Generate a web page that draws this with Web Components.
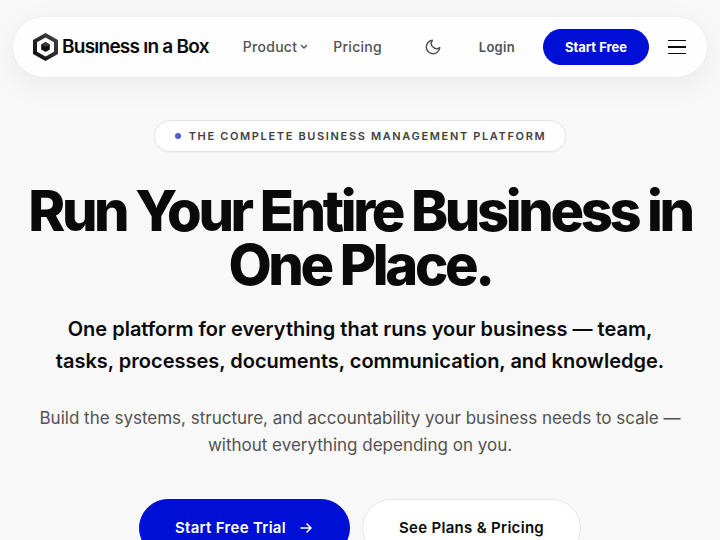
<!DOCTYPE html>
<html lang="en">
<head>
<meta charset="utf-8">
<meta name="viewport" content="width=device-width, initial-scale=1">
<title>Business in a Box</title>
<style>
body { margin: 0; background: #f8f8f8; color: #0a0a0a; font-family: Inter, "Liberation Sans", sans-serif; }
</style>
</head>
<body>
<landing-page></landing-page>
<script>
const define = (name, html) => customElements.define(name, class extends HTMLElement {
  constructor() {
    super();
    this.attachShadow({ mode: "open" }).innerHTML = "<style>*{box-sizing:border-box}</style>" + html;
  }
});

define("brand-logo", `
<style>
:host { display: block; }
a { display: flex; align-items: center; gap: 4px; color: #0a0a0a; text-decoration: none; font-size: 19px; line-height: 28px; font-weight: 600; letter-spacing: -0.04em; white-space: nowrap; }
svg { display: block; flex: none; }
</style>
<a href="#">
<svg width="26" height="28" viewBox="0 0 26 28" aria-hidden="true">
<defs><linearGradient id="g" x1="0" y1="1" x2="1" y2="0"><stop offset="0" stop-color="#050505"/><stop offset=".5" stop-color="#2a2a2a"/><stop offset="1" stop-color="#444"/></linearGradient></defs>
<path fill="url(#g)" fill-rule="evenodd" d="M13.500 0 26 7V21L13.500 28 1 21V7ZM13.500 4.500 5 9.300V18.700L13.500 23.500 22 18.700V9.300Z"/>
<path fill="#111" d="M13.500 9 17.800 11.500V16.500L13.500 19 9.200 16.500V11.500Z"/>
<path fill="#3c3c3c" d="M13.500 9 17.800 11.500 13.500 14 9.200 11.500Z"/>
</svg>
<slot></slot></a>`);

define("nav-link", `
<style>
:host { display: block; }
a { display: flex; align-items: center; gap: 3px; color: #525252; text-decoration: none; font-size: 14px; line-height: 20px; font-weight: 500; letter-spacing: 0.02em; }
svg { display: none; }
:host([menu]) svg { display: block; }
:host([strong]) a { font-size: 13px; font-weight: 600; letter-spacing: 0.02em; }
</style>
<a href="#"><slot></slot><svg width="8" height="8" viewBox="0 0 8 8" fill="none" stroke="currentColor" stroke-width="1.400" stroke-linecap="round" stroke-linejoin="round" aria-hidden="true"><path d="M1.500 2.500 4 5 6.500 2.500"/></svg></a>`);

define("theme-toggle", `
<style>
:host { display: block; }
button { display: grid; place-items: center; width: 36px; height: 36px; padding: 0; border: 0; background: none; color: #525252; }
</style>
<button type="button" aria-label="Switch theme"><svg width="18" height="18" viewBox="0 0 24 24" fill="none" stroke="currentColor" stroke-width="2" stroke-linecap="round" stroke-linejoin="round"><path d="M21 12.790A9 9 0 1 1 11.210 3 7 7 0 0 0 21 12.790z"/></svg></button>`);

define("menu-toggle", `
<style>
:host { display: block; }
button { display: grid; place-items: center; width: 18px; height: 36px; padding: 0; border: 0; background: none; color: #0a0a0a; }
svg { display: block; }
</style>
<button type="button" aria-label="Open menu"><svg width="18" height="16" viewBox="0 0 18 16" fill="currentColor"><path d="M0 1h18v1H0zM0 7h18v2H0zM0 14h18v1H0z"/></svg></button>`);

define("pill-button", `
<style>
:host { display: block; }
a { display: flex; align-items: center; justify-content: center; height: 58px; padding: 0 36px; border-radius: 29px; border: 1px solid #e5e5e5; background: #fff; color: #0a0a0a; text-decoration: none; font-size: 15px; line-height: 20px; font-weight: 600; letter-spacing: 0.02em; white-space: nowrap; gap: 12px; }
:host([primary]) a { padding: 0 35px; background: #000fd6; border-color: #000fd6; color: #fff; }
:host([small]) a { height: 36px; padding: 0 21px; font-size: 13px; font-weight: 700; border-radius: 18px; letter-spacing: normal; }
</style>
<a href="#"><slot></slot><slot name="icon"></slot></a>`);

define("site-header", `
<style>
:host { display: block; padding: 17px 13px 0; }
header { display: flex; align-items: center; height: 60px; padding: 0 21px 0 19px; border-radius: 30px; background: #fefefe; box-shadow: 0 0 1px rgba(0,0,0,.12), 0 8px 32px rgba(0,0,0,.06); }
nav { display: flex; gap: 25px; margin-left: 34px; }
.tools { display: flex; align-items: center; margin-left: auto; }
nav-link[strong] { margin: 0 28px; }
menu-toggle { margin-left: 19px; }
</style>
<header>
<brand-logo>Busıness ın a Box</brand-logo>
<nav aria-label="Main"><nav-link menu>Product</nav-link><nav-link>Pricing</nav-link></nav>
<div class="tools"><theme-toggle></theme-toggle><nav-link strong>Login</nav-link><pill-button primary small>Start Free</pill-button><menu-toggle></menu-toggle></div>
</header>`);

define("eyebrow-badge", `
<style>
:host { display: inline-flex; align-items: center; gap: 8px; height: 32px; padding: 0 19px 0 20px; border: 1px solid #e5e5e5; border-radius: 16px; background: #fff; color: #404040; font-size: 11px; line-height: 16px; font-weight: 600; letter-spacing: 0.15em; text-transform: uppercase; box-shadow: 0 1px 2px rgba(0,0,0,.04); box-sizing: border-box; }
i { width: 6px; height: 6px; border-radius: 3px; background: #4f5bd5; }
</style>
<i></i><span><slot></slot></span>`);

define("hero-section", `
<style>
:host { display: flex; flex-direction: column; align-items: center; padding: 43px 24px 0; text-align: center; }
h1 { margin: 32px 0 0; font-size: 56px; line-height: 54px; font-weight: 800; letter-spacing: -0.06em; }
.lead { margin: 21px 0 0; max-width: 620px; font-size: 20px; line-height: 32px; font-weight: 600; }
.text { margin: 28px 0 0; max-width: 660px; font-size: 17px; line-height: 27px; color: #525252; }
.actions { display: flex; gap: 12px; margin-top: 40px; }
</style>
<eyebrow-badge>The complete business management platform</eyebrow-badge>
<h1>Run Your Entire Business in One Place.</h1>
<p class="lead">One platform for everything that runs your business — team, tasks, processes, documents, communication, and knowledge.</p>
<p class="text">Build the systems, structure, and accountability your business needs to scale — without everything depending on you.</p>
<div class="actions">
<pill-button primary>Start Free Trial<svg slot="icon" width="16" height="16" viewBox="0 0 16 16" fill="none" stroke="currentColor" stroke-width="1.600" stroke-linecap="round" stroke-linejoin="round" aria-hidden="true"><path d="M3 8H13M9 4 13 8 9 12"/></svg></pill-button>
<pill-button>See Plans &amp; Pricing</pill-button>
</div>`);

define("landing-page", `
<style>:host { display: block; height: 100vh; overflow: hidden; }</style>
<site-header></site-header>
<main><hero-section></hero-section></main>`);
</script>
</body>
</html>
